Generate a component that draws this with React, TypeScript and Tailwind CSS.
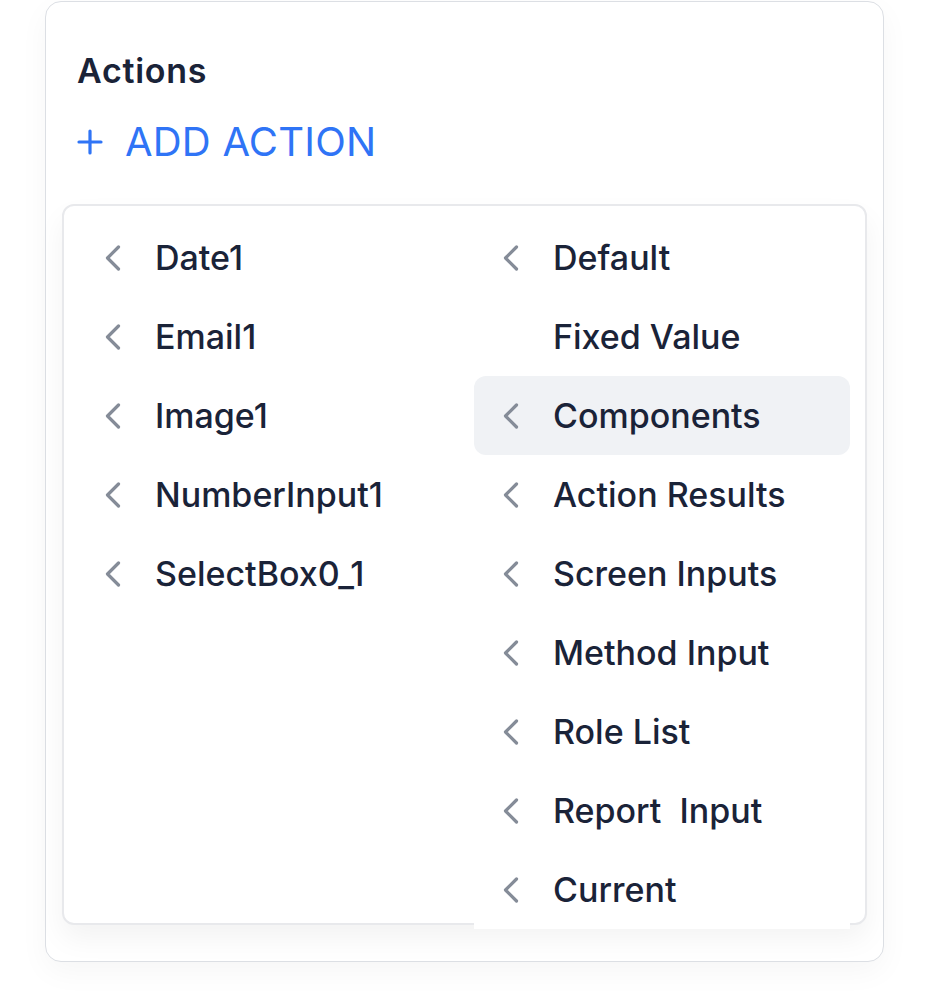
import React from 'react';

interface MenuItem {
  label: string;
  hasChildren: boolean;
  active?: boolean;
}

const components: MenuItem[] = [
  { label: 'Date1', hasChildren: true },
  { label: 'Email1', hasChildren: true },
  { label: 'Image1', hasChildren: true },
  { label: 'NumberInput1', hasChildren: true },
  { label: 'SelectBox0_1', hasChildren: true },
];

const sources: MenuItem[] = [
  { label: 'Default', hasChildren: true },
  { label: 'Fixed Value', hasChildren: false },
  { label: 'Components', hasChildren: true, active: true },
  { label: 'Action Results', hasChildren: true },
  { label: 'Screen Inputs', hasChildren: true },
  { label: 'Method Input', hasChildren: true },
  { label: 'Role List', hasChildren: true },
  { label: 'Report\u00a0 Input', hasChildren: true },
  { label: 'Current', hasChildren: true },
];

function Chevron() {
  return (
    <svg width="16" height="26" viewBox="0 0 16 26" className="shrink-0">
      <polyline
        points="13.5,2 2.5,13 13.5,24"
        fill="none"
        stroke="#858c98"
        strokeWidth="3.2"
        strokeLinecap="round"
        strokeLinejoin="round"
      />
    </svg>
  );
}

function Row({ item }: { item: MenuItem }) {
  return (
    <div
      className={`relative z-10 flex h-[79px] items-center pl-[29px] ${
        item.active ? 'rounded-xl bg-[#f0f2f5]' : 'bg-white'
      }`}
    >
      {item.hasChildren ? <Chevron /> : <div className="w-4 shrink-0" />}
      <span className="ml-[34px] whitespace-pre text-[34px] font-medium text-[#1a2338]">
        {item.label}
      </span>
    </div>
  );
}

export default function App() {
  return (
    <div className="min-h-screen bg-white pl-[45px] pt-px font-['Inter',sans-serif]">
      <div className="w-[839px] rounded-2xl border border-[#dcdfe4] bg-white px-4 pb-9 pt-[49px] shadow-[0_10px_30px_rgba(0,0,0,0.04)]">
        <h2 className="pl-[15px] text-[34px] font-semibold leading-10 tracking-[0.7px] text-[#1a2338]">
          Actions
        </h2>
        <button className="mt-[27px] flex h-12 items-center pl-[15px] text-[#2f74f6]">
          <svg width="26" height="26" viewBox="0 0 26 26" className="shrink-0">
            <path d="M13 2v22M2 13h22" stroke="#2f74f6" strokeWidth="3.2" strokeLinecap="round" />
          </svg>
          <span className="ml-[22px] text-[40px] leading-none tracking-[0.2px]">ADD ACTION</span>
        </button>
        <div className="mt-[38px] flex h-[721px] rounded-xl border-2 border-[#e8e9ec] bg-white shadow-[0_14px_28px_rgba(0,0,0,0.05)]">
          <div className="w-[398px] px-3 pt-[12px]">
            {components.map((c) => (
              <Row key={c.label} item={c} />
            ))}
          </div>
          <div className="w-[400px] px-3 pt-[12px]">
            {sources.map((s) => (
              <Row key={s.label} item={s} />
            ))}
          </div>
        </div>
      </div>
    </div>
  );
}
